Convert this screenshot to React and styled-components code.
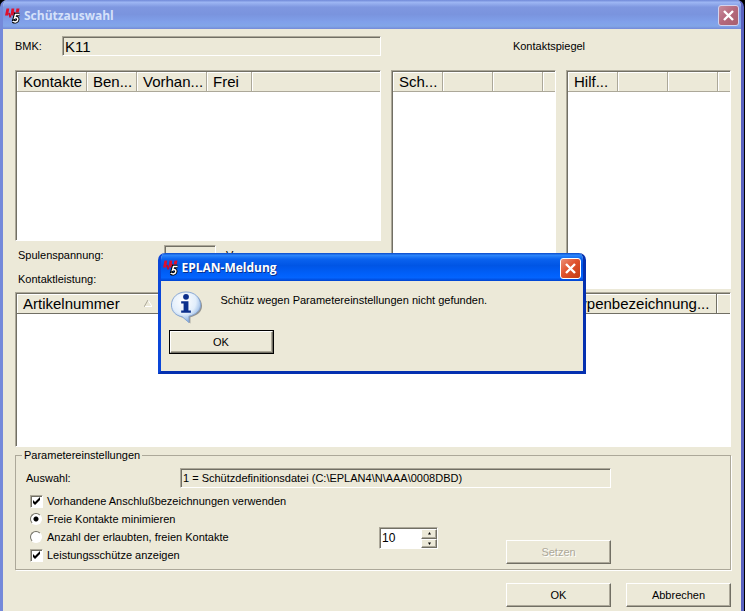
import React from "react";
import styled, { createGlobalStyle, css } from "styled-components";

const GlobalStyle = createGlobalStyle`
	* {
		box-sizing: border-box;
	}

	body {
		margin: 0;
		background: #000;
		color: #000;
		font-family: "Liberation Sans", Arial, sans-serif;
		font-size: 11px;
		line-height: 14px;
	}

	button, input {
		font: inherit;
		color: inherit;
	}
`;

const Logo = () => (
	<LogoSvg viewBox="0 0 18 18" aria-hidden="true">
		<path d="M2.500 1.500h2.800L4 8.500H1zM7.500 1.500h2.800L9.500 8.500h-3zM12.500 1.500h3l-.8 4h-3z" fill="#e0102c" />
		<path d="M5 6l1.500 4.500M10 5l1 3" stroke="#c40d30" strokeWidth="2" />
		<path
			d="M15.500 7.500h-4l-1 3.500c1.700-.9 3.600-.3 3.300 1.600-.3 2.200-2.800 3-5 1.600"
			fill="none"
			stroke="#000"
			strokeWidth="3.400"
		/>
		<path
			d="M15.500 7.500h-4l-1 3.500c1.700-.9 3.600-.3 3.300 1.600-.3 2.200-2.800 3-5 1.600"
			fill="none"
			stroke="#fff"
			strokeWidth="1.500"
		/>
	</LogoSvg>
);

const InfoIcon = () => (
	<InfoSvg viewBox="0 0 34 34" aria-hidden="true">
		<defs>
			<radialGradient id="balloon" cx="42%" cy="30%" r="70%">
				<stop offset="0" stopColor="#fff" />
				<stop offset="0.6" stopColor="#e2eefb" />
				<stop offset="1" stopColor="#7fa9e0" />
			</radialGradient>
		</defs>
		<path
			d="M18 3C9.500 3 3 8 3 16c0 6 5 10.500 11 11.500l7 6v-6.500c7-1.500 12-5.500 12-11.500C33 8 27 3 18 3z"
			fill="#66676b"
			opacity="0.65"
		/>
		<path
			d="M16.500 1C7.500 1 1.500 7 1.500 14.500c0 6.500 4.500 11 11 12l7 6V26c7-1.500 12-6 12-11.500C31.500 7 25.500 1 16.500 1z"
			fill="url(#balloon)"
			stroke="#86a6d4"
		/>
		<circle cx="16.500" cy="6" r="3" fill="#0b2f8c" />
		<path d="M11.500 10.500h7.500v9.500h2.500v2.500h-10V20H14v-7h-2.500z" fill="#0b2f8c" />
	</InfoSvg>
);

const Close = ({ $active }) => (
	<CloseButton type="button" aria-label="Schließen" $active={$active}>
		<svg viewBox="0 0 19 19">
			<path d="M5 5l9 9M14 5l-9 9" stroke="#fff" strokeWidth="2.400" />
		</svg>
	</CloseButton>
);

const contactColumns = [
	{ label: "Kontakte", width: 70 },
	{ label: "Ben...", width: 50 },
	{ label: "Vorhan...", width: 70 },
	{ label: "Frei", width: 45 },
	{ label: "" },
];

const mirrorColumns = (label) => [
	{ label, width: 50 },
	{ label: "", width: 50 },
	{ label: "", width: 50 },
	{ label: "" },
];

const articleColumns = [
	{ label: "Artikelnummer", width: 142, sorted: true },
	{ label: "" },
	{ label: "Typenbezeichnung...", width: 152 },
	{ label: "", width: 13 },
];

const ListView = ({ columns, label, $height, $dark }) => (
	<ListFrame $height={$height}>
		<ListTable aria-label={label} $dark={$dark}>
			<thead>
				<tr>
					{columns.map((column, i) => (
						<HeaderCell key={i} scope="col" $width={column.width}>
							{column.label}
							{column.sorted && (
								<SortArrow viewBox="0 0 8 7" aria-hidden="true">
									<path d="M4 0l4 6.500H0" fill="none" stroke="#fff" />
									<path d="M4 0L0 7" stroke="#aca899" />
								</SortArrow>
							)}
						</HeaderCell>
					))}
				</tr>
			</thead>
		</ListTable>
	</ListFrame>
);

const App = () => {
	return (
		<>
			<GlobalStyle />
			<Window>
				<TitleBar>
					<Logo />
					<Title>Schützauswahl</Title>
					<Close />
				</TitleBar>

				<Content>
					<Columns>
						<BmkRow>
							<label htmlFor="bmk">BMK:</label>
							<Field id="bmk" defaultValue="K11" readOnly $large />
						</BmkRow>
						<MirrorTitle>Kontaktspiegel</MirrorTitle>

						<Stack>
							<ListView columns={contactColumns} label="Kontakte" $height={171} />
							<ValueRow>
								<label htmlFor="voltage">Spulenspannung:</label>
								<Field id="voltage" readOnly />
								<span>V</span>
							</ValueRow>
							<ValueRow>
								<label htmlFor="power">Kontaktleistung:</label>
								<Field id="power" readOnly />
							</ValueRow>
						</Stack>
						<ListView columns={mirrorColumns("Sch...")} label="Schütz" />
						<ListView columns={mirrorColumns("Hilf...")} label="Hilfsschütz" />
					</Columns>

					<ListView columns={articleColumns} label="Artikel" $height={155} $dark />

					<Group>
						<GroupTitle>Parametereinstellungen</GroupTitle>
						<SelectionRow>
							<label htmlFor="selection">Auswahl:</label>
							<Field
								id="selection"
								defaultValue="1 = Schützdefinitionsdatei (C:\EPLAN4\N\AAA\0008DBD)"
								readOnly
							/>
						</SelectionRow>
						<SettingsRow>
							<Options>
								<Option>
									<Checkbox defaultChecked />
									Vorhandene Anschlußbezeichnungen verwenden
								</Option>
								<Option>
									<Radio name="contacts" defaultChecked />
									Freie Kontakte minimieren
								</Option>
								<Option>
									<Radio name="contacts" />
									Anzahl der erlaubten, freien Kontakte
								</Option>
								<Option>
									<Checkbox defaultChecked />
									Leistungsschütze anzeigen
								</Option>
							</Options>
							<Spinner>
								<input aria-label="Anzahl freie Kontakte" defaultValue="10" />
								<SpinButtons>
									<button type="button" aria-label="Mehr">
										<svg viewBox="0 0 5 3"><path d="M1 2.500L2.500 0 4 2.500z" /></svg>
									</button>
									<button type="button" aria-label="Weniger">
										<svg viewBox="0 0 5 3"><path d="M1 0.500L2.500 3 4 0.500z" /></svg>
									</button>
								</SpinButtons>
							</Spinner>
							<Button type="button" disabled>Setzen</Button>
						</SettingsRow>
					</Group>

					<Actions>
						<Button type="button">OK</Button>
						<Button type="button">Abbrechen</Button>
					</Actions>
				</Content>
			</Window>

			<Overlay>
				<Dialog role="dialog" aria-labelledby="dialog-title">
					<TitleBar $active>
						<Logo />
						<Title id="dialog-title" $active>EPLAN-Meldung</Title>
						<Close $active />
					</TitleBar>
					<DialogBody>
						<Message>
							<InfoIcon />
							<p>Schütz wegen Parametereinstellungen nicht gefunden.</p>
						</Message>
						<Button type="button" $default>OK</Button>
					</DialogBody>
				</Dialog>
			</Overlay>
		</>
	);
};

const sunken = css`
	border: 1px solid;
	border-color: #aca899 #fff #fff #aca899;
	box-shadow: inset 1px 1px 0 #716f64;
`;

const Window = styled.main`
	min-height: 100vh;
	margin-right: 1px;
	background: #ece9d8;
	border: solid #7489da;
	border-width: 0 3px 0 3px;
	border-right-color: #5a62c0;
	border-radius: 7px 7px 0 0;
	overflow: hidden;
`;

const TitleBar = styled.header`
	display: flex;
	align-items: center;
	height: ${(p) => (p.$active ? 28 : 29)}px;
	padding: 2px 2px 0 1px;
	background: ${(p) =>
		p.$active
			? "linear-gradient(#0a48c8 0, #2c86fb 8%, #0a62ee 22%, #0055e5 45%, #0060fa 75%, #0364fe 88%, #0043cf)"
			: "linear-gradient(#7089d8 0, #9db6f3 8%, #7e97e0 25%, #7a94de 50%, #80a0ea 75%, #82a6e8 90%, #748ad8)"};
`;

const LogoSvg = styled.svg`
	flex: none;
	width: 18px;
	height: 18px;
`;

const Title = styled.h1`
	flex: 1;
	margin: 0 0 0 2px;
	font-family: "Open Sans", "Noto Sans", sans-serif;
	font-size: 12px;
	font-weight: bold;
	line-height: 18px;
	color: ${(p) => (p.$active ? "#fff" : "#d5e1fa")};
	text-shadow: ${(p) => (p.$active ? "1px 1px 0 #0a318c" : "none")};
`;

const CloseButton = styled.button`
	flex: none;
	width: 21px;
	height: 21px;
	padding: 0;
	border: 1px solid ${(p) => (p.$active ? "#fff" : "#d3d3ee")};
	border-radius: 3px;
	background: ${(p) =>
		p.$active
			? "linear-gradient(135deg, #ec9078, #e0532e 45%, #c33c14)"
			: "linear-gradient(135deg, #c88c9c, #b4687c 50%, #a8606c)"};

	svg {
		display: block;
		width: 19px;
		height: 19px;
	}
`;

const Content = styled.div`
	padding: 7px 10px 3px 12px;
`;

const Columns = styled.div`
	display: grid;
	grid-template-columns: 366fr 165fr 165fr;
	column-gap: 10px;
	row-gap: 14px;
	margin-bottom: 3px;
`;

const Field = styled.input`
	${sunken}
	min-width: 0;
	height: 20px;
	padding: 0 2px;
	background: #ece9d8;
	border-radius: 0;
	font-size: ${(p) => (p.$large ? 15 : 11)}px;
	outline: none;
`;

const BmkRow = styled.div`
	display: grid;
	grid-template-columns: 47px 1fr;
	align-items: center;
`;

const MirrorTitle = styled.h2`
	grid-column: 2 / 4;
	align-self: center;
	margin: 0;
	padding-right: 24px;
	font-size: 11px;
	font-weight: normal;
	text-align: center;
`;

const Stack = styled.div`
	display: flex;
	flex-direction: column;
`;

const ValueRow = styled.div`
	display: grid;
	grid-template-columns: 146px 52px auto;
	align-items: center;
	padding: 4px 0 0 3px;

	span {
		margin-left: 10px;
	}
`;

const ListFrame = styled.div`
	${sunken}
	height: ${(p) => (p.$height ? `${p.$height}px` : "auto")};
	padding: 1px 0 0 1px;
	background: #fff;
	overflow: hidden;
`;

const ListTable = styled.table`
	width: 100%;
	table-layout: fixed;
	border-collapse: separate;
	border-spacing: 0;
	--edge: ${(p) => (p.$dark ? "#716f64" : "#aca899")};
`;

const HeaderCell = styled.th`
	width: ${(p) => (p.$width ? `${p.$width}px` : "auto")};
	height: 20px;
	padding: 1px 0 0 6px;
	border-bottom: 1px solid var(--edge);
	border-right: 1px solid var(--edge);
	background: #ece9d8;
	box-shadow: inset 1px 1px 0 #fff;
	font-size: 15px;
	font-weight: normal;
	line-height: 18px;
	text-align: left;
	white-space: nowrap;
	overflow: hidden;

	&:last-child {
		border-right: 0;
	}
`;

const SortArrow = styled.svg`
	width: 8px;
	height: 7px;
	margin-left: 24px;
	vertical-align: 2px;
`;

const Group = styled.fieldset`
	min-width: 0;
	margin: 1px 0 13px;
	padding: 6px 0 5px 10px;
	border: 1px solid #aca899;
	box-shadow: 1px 1px 0 #fff;
`;

const GroupTitle = styled.legend`
	margin-left: -4px;
	padding: 0 2px;
`;

const SelectionRow = styled.div`
	display: grid;
	grid-template-columns: 154px 1fr;
	align-items: center;
	margin-right: 119px;
`;

const SettingsRow = styled.div`
	display: flex;
	align-items: flex-end;
	padding: 4px 119px 0 4px;
`;

const Options = styled.div`
	flex: 0 0 349px;
`;

const Option = styled.label`
	display: flex;
	align-items: center;
	gap: 4px;
	height: 18px;
	white-space: nowrap;
`;

const Checkbox = styled.input.attrs({ type: "checkbox" })`
	${sunken}
	appearance: none;
	width: 13px;
	height: 13px;
	margin: 0;
	background: #fff;

	&:checked {
		background: #fff
			url('data:image/svg+xml,<svg xmlns="http://www.w3.org/2000/svg" viewBox="0 0 9 9"><path d="M1 3v3l2 2 5-5V0L3 5z"/></svg>')
			center / 9px 9px no-repeat;
	}
`;

const Radio = styled.input.attrs({ type: "radio" })`
	appearance: none;
	width: 12px;
	height: 12px;
	margin: 0 1px 0 0;
	border: 1px solid;
	border-color: #716f64 #fff #fff #716f64;
	border-radius: 50%;
	background: #fff;

	&:checked {
		background: radial-gradient(circle, #000 2px, #fff 3px);
	}
`;

const Spinner = styled.div`
	${sunken}
	display: flex;
	width: 59px;
	height: 22px;
	margin-bottom: 15px;
	padding: 1px 0 0 1px;
	background: #fff;

	input {
		flex: 1;
		min-width: 0;
		padding: 0 0 2px 1px;
		border: 0;
		background: transparent;
		font-size: 12px;
		outline: none;
	}
`;

const raised = css`
	border: 1px solid;
	border-color: #fff #716f64 #716f64 #fff;
	box-shadow: inset -1px -1px 0 #aca899;
	background: #ece9d8;
`;

const SpinButtons = styled.div`
	display: flex;
	flex-direction: column;
	width: 16px;

	button {
		${raised}
		display: flex;
		flex: 1;
		align-items: center;
		justify-content: center;
		min-height: 0;
		padding: 0;
	}

	svg {
		width: 5px;
		height: 3px;
	}
`;

const Button = styled.button`
	${raised}
	width: 105px;
	height: 24px;
	padding: 0;
	border-radius: 0;
	outline: ${(p) => (p.$default ? "1px solid #000" : "none")};
	outline-offset: 0;

	&:disabled {
		margin-left: auto;
		color: #aca899;
		text-shadow: 1px 1px 0 #fff;
	}
`;

const Actions = styled.footer`
	display: flex;
	justify-content: flex-end;
	gap: 15px;
`;

const Overlay = styled.div`
	position: absolute;
	top: 253px;
	left: 0;
	right: 0;
	display: flex;
	justify-content: center;
	padding-right: 2px;
`;

const Dialog = styled.section`
	width: 428px;
	background: #ece9d8;
	border: solid #0a46d8;
	border-width: 0 3px 3px 3px;
	border-right-color: #0430b0;
	border-bottom-color: #0430b0;
	border-radius: 7px 7px 0 0;
	overflow: hidden;
`;

const DialogBody = styled.div`
	padding: 10px 9px 18px;

	${Button} {
		width: 103px;
		height: 22px;
	}
`;

const Message = styled.div`
	display: flex;
	align-items: flex-start;
	gap: 18px;
	margin-bottom: 7px;

	p {
		margin: 2px 0 0;
	}
`;

const InfoSvg = styled.svg`
	flex: none;
	width: 33px;
	height: 33px;
`;

export default App;
